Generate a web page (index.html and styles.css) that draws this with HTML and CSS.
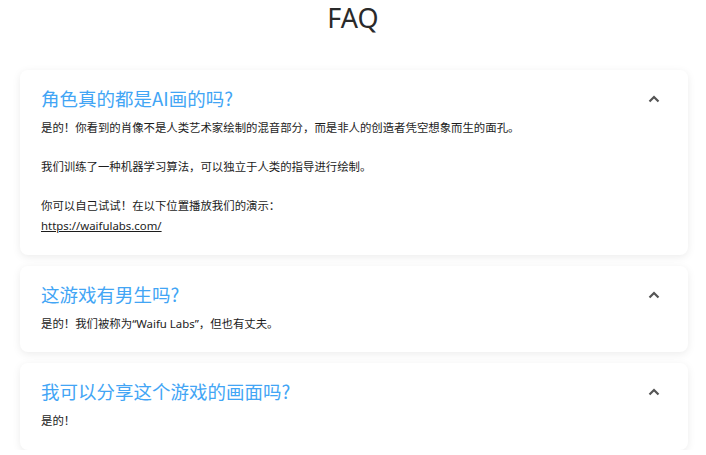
FILE: index.html
```html
<!DOCTYPE html>
<html lang="zh-CN">
<head>
  <meta charset="UTF-8" />
  <meta name="viewport" content="width=device-width, initial-scale=1" />
  <title>FAQ</title>
  <link rel="stylesheet" href="styles.css">
</head>
<body>
  <h1 class="faq-title">FAQ</h1>
  <main class="faq-list">
    <section class="faq-item">
      <div class="faq-head">
        <h2 class="faq-question">角色真的都是AI画的吗?</h2>
        <svg class="faq-chevron" width="12" height="8" viewBox="0 0 12 8">
          <path d="M1.5 6.5 L6 2 L10.5 6.5" fill="none" stroke="#555" stroke-width="2.2" />
        </svg>
      </div>
      <p class="faq-answer">
        是的！你看到的肖像不是人类艺术家绘制的混音部分，而是非人的创造者凭空想象而生的面孔。<br><br>
        我们训练了一种机器学习算法，可以独立于人类的指导进行绘制。<br><br>
        你可以自己试试！在以下位置播放我们的演示：<br>
        <a href="https://waifulabs.com/">https://waifulabs.com/</a>
      </p>
    </section>

    <section class="faq-item">
      <div class="faq-head">
        <h2 class="faq-question">这游戏有男生吗?</h2>
        <svg class="faq-chevron" width="12" height="8" viewBox="0 0 12 8">
          <path d="M1.5 6.5 L6 2 L10.5 6.5" fill="none" stroke="#555" stroke-width="2.2" />
        </svg>
      </div>
      <p class="faq-answer">是的！我们被称为“Waifu Labs”，但也有丈夫。</p>
    </section>

    <section class="faq-item">
      <div class="faq-head">
        <h2 class="faq-question">我可以分享这个游戏的画面吗?</h2>
        <svg class="faq-chevron" width="12" height="8" viewBox="0 0 12 8">
          <path d="M1.5 6.5 L6 2 L10.5 6.5" fill="none" stroke="#555" stroke-width="2.2" />
        </svg>
      </div>
      <p class="faq-answer">是的！</p>
    </section>
  </main>
</body>
</html>
```

FILE: styles.css
```css
* {
  box-sizing: border-box;
}

body {
  margin: 0;
  padding: 0;
  background: #ffffff;
  color: #1c1c1c;
  font-family: 'Noto Sans', 'Noto Sans CJK SC', sans-serif;
}

.faq-title {
  margin: 0;
  font-size: 27px;
  font-weight: 400;
  line-height: 36px;
  text-align: center;
  color: #2a2a2a;
}

.faq-list {
  display: flex;
  flex-direction: column;
  gap: 11px;
  padding: 34px 18px 0 20px;
}

.faq-item {
  background: #ffffff;
  border-radius: 8px;
  box-shadow: 0 2px 8px rgba(0, 0, 0, 0.08);
  padding: 16px 28px 19px 21px;
}

.faq-head {
  display: flex;
  align-items: center;
  justify-content: space-between;
}

.faq-question {
  margin: 0;
  font-size: 18.5px;
  font-weight: 400;
  line-height: 24px;
  color: #42a5f5;
  font-family: 'Noto Sans CJK SC', sans-serif;
}

.faq-chevron {
  display: block;
  margin-top: 2px;
}

.faq-answer {
  margin: 8px 0 0;
  font-size: 11.4px;
  line-height: 19.6px;
  color: #1c1c1c;
}

.faq-answer a {
  color: #1c1c1c;
  text-decoration: underline;
}
```
